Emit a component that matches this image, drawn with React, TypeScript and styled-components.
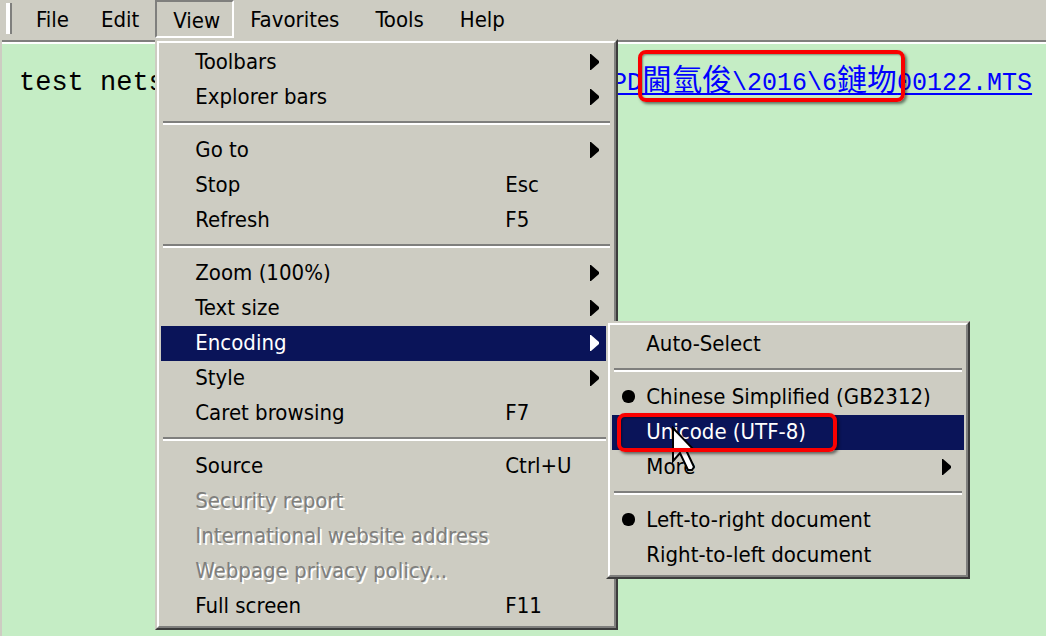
import React from "react";
import styled, { createGlobalStyle, css } from "styled-components";

const Global = createGlobalStyle`
  *, *::before, *::after { box-sizing: border-box; }
  body { margin: 0; background: #c5edc5; }
`;

const FACE = "#cdccc2";
const SHADE = "#7f7f7d";
const NAVY = "#0a1459";
const ui = css`
  font-family: Tahoma, "DejaVu Sans Condensed", "Liberation Sans", sans-serif;
  font-size: 22px;
  line-height: 30px;
`;

const Window = styled.div`
  display: flex;
  flex-direction: column;
  min-height: 100vh;
  border-left: 2px solid ${FACE};
  background: #c5edc5;
  overflow: hidden;
`;
const MenuBar = styled.nav`
  display: flex;
  align-items: flex-start;
  height: 40px;
  padding-left: 4px;
  background: ${FACE};
`;
const Grip = styled.span`
  width: 6px;
  height: 31px;
  margin: 3px 8px 0 0;
  border-left: 4px solid #fff;
  border-right: 2px solid ${SHADE};
`;
const BarGroup = styled.div<{ $gap: number }>`
  display: flex;
  gap: ${(p) => p.$gap}px;
`;
const BarItem = styled.div`
  position: relative;
`;
const BarButton = styled.button<{ $open?: boolean }>`
  ${ui}
  display: block;
  height: 38px;
  padding: ${(p) => (p.$open ? "4px 12px 0 16px" : "5px 16px 3px")};
  border: 0 solid;
  ${(p) => p.$open && `border-width: 2px; border-color: ${SHADE} #fff #fff ${SHADE};`}
  background: none;
  color: #000;
`;
const Menu = styled.div<{ $width: number }>`
  position: absolute;
  z-index: 2;
  top: 39px;
  left: 0;
  width: ${(p) => p.$width}px;
  padding: 2px;
  border: 2px solid;
  border-color: ${FACE} #3c3c3c #3c3c3c ${FACE};
  background: ${FACE};
  &::before {
    content: "";
    position: absolute;
    inset: 0;
    border: 2px solid;
    border-color: #fff ${SHADE} ${SHADE} #fff;
    pointer-events: none;
  }
`;
const SubMenu = styled(Menu)`
  top: -5px;
  left: 445px;
`;
const Rows = styled.div`
  padding: 2px;
`;
const ItemWrap = styled.div`
  position: relative;
`;
const Item = styled.button<{ $active?: boolean }>`
  ${ui}
  display: grid;
  grid-template-columns: 34px 1fr auto 22px;
  align-items: center;
  width: 100%;
  height: 35px;
  padding: 0 0 2px;
  border: 0;
  text-align: left;
  background: ${(p) => (p.$active ? NAVY : "transparent")};
  color: ${(p) => (p.$active ? "#fff" : "#000")};
  &:disabled { color: #7f7f7d; text-shadow: 2px 2px 0 #fff; }
`;
const Label = styled.span`
  white-space: nowrap;
`;
const Shortcut = styled.span`
  width: 85px;
`;
const Dot = styled.span`
  width: 13px;
  height: 13px;
  margin-left: 10px;
  border-radius: 6px;
  background: #000;
`;
const Arrow = styled.svg`
  width: 9px;
  height: 16px;
  fill: currentColor;
`;
const Rule = styled.hr`
  height: 4px;
  margin: 6px 2px 8px;
  border: 0;
  border-top: 2px solid ${SHADE};
  border-bottom: 2px solid #fff;
`;
const Page = styled.main`
  flex: 1;
  border-top: 2px solid ${SHADE};
  box-shadow: inset 0 2px 0 #fff;
  padding: 17px 0 0 17px;
`;
const Line = styled.p`
  display: flex;
  align-items: baseline;
  margin: 0;
  line-height: 36px;
  white-space: nowrap;
  color: #000;
`;
const Typed = styled.span`
  width: 593px;
  font-family: "Liberation Mono", monospace;
  font-size: 27px;
`;
const FileLink = styled.a`
  font-family: "Liberation Mono", "Noto Sans CJK SC", monospace;
  font-size: 25px;
  color: #00f;
  text-decoration: underline 2px;
  text-underline-offset: 3px;
  text-decoration-skip-ink: none;
`;
const Cjk = styled.span`
  font-family: "Noto Sans CJK SC", sans-serif;
  font-size: 30px;
`;
const ring = css`
  content: "";
  position: absolute;
  z-index: 4;
  border: 4px solid #fa0000;
  border-radius: 8px;
  box-shadow: 2px 2px 3px rgba(0, 0, 0, 0.5), inset 1px 1px 2px rgba(0, 0, 0, 0.4);
  pointer-events: none;
`;
const Circled = styled.span`
  position: relative;
  &::after { ${ring} inset: -19px -8px -4px -4px; }
`;
const RingedWrap = styled(ItemWrap)`
  &::after { ${ring} top: -2px; bottom: -2px; left: 5px; width: 220px; }
`;
const Pointer = styled.svg`
  position: absolute;
  z-index: 3;
  top: 11px;
  left: 60px;
  width: 24px;
  height: 46px;
`;

const Chevron = () => (
  <Arrow viewBox="0 0 9 16"><path d="M0 0h1l8 7v2l-8 7H0z" /></Arrow>
);

type RowProps = { label: string; keys?: string; more?: boolean; dot?: boolean; active?: boolean; disabled?: boolean };
const Row = ({ label, keys, more, dot, active, disabled }: RowProps) => (
  <Item type="button" role="menuitem" $active={active} disabled={disabled}>
    {dot ? <Dot /> : <span />}
    <Label>{label}</Label>
    {keys ? <Shortcut>{keys}</Shortcut> : <span />}
    {more ? <Chevron /> : <span />}
  </Item>
);

export default function App() {
  return (
    <>
      <Global />
      <Window>
        <MenuBar>
          <Grip />
          <BarGroup $gap={0}>
            <BarItem><BarButton>File</BarButton></BarItem>
            <BarItem><BarButton>Edit</BarButton></BarItem>
            <BarItem>
              <BarButton $open>View</BarButton>
              <Menu role="menu" $width={463}>
                <Rows>
                  <Row label="Toolbars" more />
                  <Row label="Explorer bars" more />
                  <Rule />
                  <Row label="Go to" more />
                  <Row label="Stop" keys="Esc" />
                  <Row label="Refresh" keys="F5" />
                  <Rule />
                  <Row label="Zoom (100%)" more />
                  <Row label="Text size" more />
                  <ItemWrap>
                    <Row label="Encoding" more active />
                    <SubMenu role="menu" $width={364}>
                      <Rows>
                        <Row label="Auto-Select" />
                        <Rule />
                        <Row label="Chinese Simplified (GB2312)" dot />
                        <RingedWrap>
                          <Row label="Unicode (UTF-8)" active />
                          <Pointer viewBox="0 0 24 46">
                            <path d="M1 2v33l7-8 8 17h4l2-3-8-17h8z" fill="#fff" stroke="#000" strokeWidth="2" />
                          </Pointer>
                        </RingedWrap>
                        <Row label="More" more />
                        <Rule />
                        <Row label="Left-to-right document" dot />
                        <Row label="Right-to-left document" />
                      </Rows>
                    </SubMenu>
                  </ItemWrap>
                  <Row label="Style" more />
                  <Row label="Caret browsing" keys="F7" />
                  <Rule />
                  <Row label="Source" keys="Ctrl+U" />
                  <Row label="Security report" disabled />
                  <Row label="International website address" disabled />
                  <Row label="Webpage privacy policy..." disabled />
                  <Row label="Full screen" keys="F11" />
                </Rows>
              </Menu>
            </BarItem>
          </BarGroup>
          <BarGroup $gap={4}>
            <BarItem><BarButton>Favorites</BarButton></BarItem>
            <BarItem><BarButton>Tools</BarButton></BarItem>
            <BarItem><BarButton>Help</BarButton></BarItem>
          </BarGroup>
        </MenuBar>
        <Page>
          <Line>
            <Typed>test nets</Typed>
            <FileLink href="#file">
              PD<Circled><Cjk>閫氫俊</Cjk>\2016\6<Cjk>鏈圽</Cjk></Circled>00122.MTS
            </FileLink>
          </Line>
        </Page>
      </Window>
    </>
  );
}
